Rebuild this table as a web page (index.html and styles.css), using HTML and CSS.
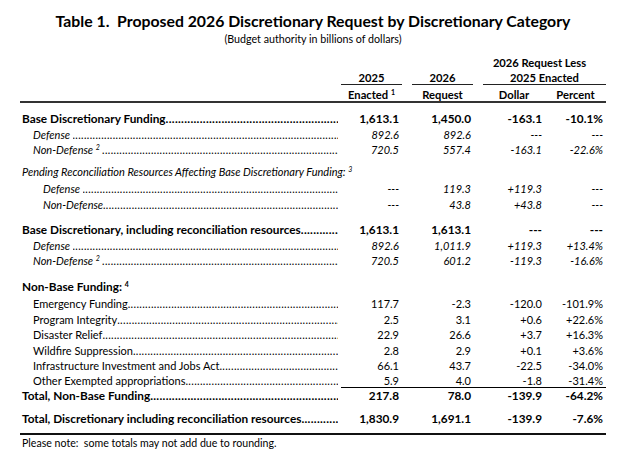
FILE: index.html
```html
<!DOCTYPE html>
<html>
<head>
<meta charset="utf-8">
<link rel="stylesheet" href="styles.css">
</head>
<body>
<div class="page">
  <h1 class="title">Table 1.&nbsp; Proposed 2026 Discretionary Request by Discretionary Category</h1>
  <p class="sub">(Budget authority in billions of dollars)</p>

  <div class="tbl">
    <div class="row hrow h1">
      <div class="lbl"></div><div></div><div></div>
      <div class="grp">2026 Request Less</div>
    </div>
    <div class="row hrow h2">
      <div class="lbl"></div>
      <div class="u">2025</div>
      <div class="u ml">2026</div>
      <div class="grp u ml">2025 Enacted</div>
    </div>
    <div class="row hrow h3">
      <div class="lbl"></div>
      <div>Enacted <sup>1</sup></div>
      <div class="ml">Request</div>
      <div class="ml">Dollar</div>
      <div>Percent</div>
    </div>

    <div class="row b first">
      <div class="lbl"><span>Base Discretionary Funding</span><span class="lead"></span></div>
      <div class="n">1,613.1</div><div class="n">1,450.0</div><div class="n">-163.1</div><div class="n">-10.1%</div>
    </div>
    <div class="row i">
      <div class="lbl in1"><span>Defense&nbsp;</span><span class="lead"></span></div>
      <div class="n">892.6</div><div class="n">892.6</div><div class="n">---</div><div class="n">---</div>
    </div>
    <div class="row i">
      <div class="lbl in1"><span>Non-Defense&nbsp;<sup>2</sup>&nbsp;</span><span class="lead"></span></div>
      <div class="n">720.5</div><div class="n">557.4</div><div class="n">-163.1</div><div class="n">-22.6%</div>
    </div>

    <div class="row i pend">
      <div class="lbl wide"><span>Pending Reconciliation Resources Affecting Base Discretionary Funding:&nbsp;<sup>3</sup></span></div>
    </div>
    <div class="row i">
      <div class="lbl in2"><span>Defense&nbsp;</span><span class="lead"></span></div>
      <div class="n">---</div><div class="n">119.3</div><div class="n">+119.3</div><div class="n">---</div>
    </div>
    <div class="row i">
      <div class="lbl in2"><span>Non-Defense</span><span class="lead"></span></div>
      <div class="n">---</div><div class="n">43.8</div><div class="n">+43.8</div><div class="n">---</div>
    </div>

    <div class="row b sec">
      <div class="lbl"><span>Base Discretionary, including reconciliation resources</span><span class="lead"></span></div>
      <div class="n">1,613.1</div><div class="n">1,613.1</div><div class="n">---</div><div class="n">---</div>
    </div>
    <div class="row i">
      <div class="lbl in1"><span>Defense&nbsp;</span><span class="lead"></span></div>
      <div class="n">892.6</div><div class="n">1,011.9</div><div class="n">+119.3</div><div class="n">+13.4%</div>
    </div>
    <div class="row i">
      <div class="lbl in1"><span>Non-Defense&nbsp;<sup>2</sup>&nbsp;</span><span class="lead"></span></div>
      <div class="n">720.5</div><div class="n">601.2</div><div class="n">-119.3</div><div class="n">-16.6%</div>
    </div>

    <div class="row b nb">
      <div class="lbl wide"><span>Non-Base Funding:&nbsp;<sup>4</sup></span></div>
    </div>
    <div class="row r">
      <div class="lbl in1"><span>Emergency Funding</span><span class="lead"></span></div>
      <div class="n">117.7</div><div class="n">-2.3</div><div class="n">-120.0</div><div class="n">-101.9%</div>
    </div>
    <div class="row r">
      <div class="lbl in1"><span>Program Integrity</span><span class="lead"></span></div>
      <div class="n">2.5</div><div class="n">3.1</div><div class="n">+0.6</div><div class="n">+22.6%</div>
    </div>
    <div class="row r">
      <div class="lbl in1"><span>Disaster Relief</span><span class="lead"></span></div>
      <div class="n">22.9</div><div class="n">26.6</div><div class="n">+3.7</div><div class="n">+16.3%</div>
    </div>
    <div class="row r">
      <div class="lbl in1"><span>Wildfire Suppression</span><span class="lead"></span></div>
      <div class="n">2.8</div><div class="n">2.9</div><div class="n">+0.1</div><div class="n">+3.6%</div>
    </div>
    <div class="row r">
      <div class="lbl in1"><span>Infrastructure Investment and Jobs Act</span><span class="lead"></span></div>
      <div class="n">66.1</div><div class="n">43.7</div><div class="n">-22.5</div><div class="n">-34.0%</div>
    </div>
    <div class="row r last">
      <div class="lbl in1"><span>Other Exempted appropriations</span><span class="lead"></span></div>
      <div class="n">5.9</div><div class="n">4.0</div><div class="n">-1.8</div><div class="n">-31.4%</div>
    </div>
    <div class="row b tot">
      <div class="lbl"><span>Total, Non-Base Funding</span><span class="lead"></span></div>
      <div class="n">217.8</div><div class="n">78.0</div><div class="n">-139.9</div><div class="n">-64.2%</div>
    </div>
    <div class="row b grand">
      <div class="lbl"><span>Total, Discretionary including reconciliation resources</span><span class="lead"></span></div>
      <div class="n">1,830.9</div><div class="n">1,691.1</div><div class="n">-139.9</div><div class="n">-7.6%</div>
    </div>
  </div>
  <p class="note">Please note:&nbsp; some totals may not add due to rounding.</p>
</div>
</body>
</html>
```

FILE: styles.css
```css
html, body {
  margin: 0;
  padding: 0;
  background: #fff;
}

body {
  font-family: Lato, "Open Sans", "Liberation Sans", sans-serif;
  color: #000;
}

.page {
  width: 640px;
  padding-top: 10px;
}

.title {
  margin: 0;
  width: 586px;
  padding-left: 20px;
  text-align: center;
  font-size: 15.8px;
  line-height: 21px;
  font-weight: 700;
}

.sub {
  margin: 0;
  width: 586px;
  padding-left: 20px;
  text-align: center;
  font-size: 10.7px;
  line-height: 15px;
}

.tbl {
  margin-left: 20px;
  width: 586px;
  margin-top: 9px;
}

.row {
  display: grid;
  grid-template-columns: 321px 61px 71px 72px 61px;
  grid-template-rows: 15.5px;
  height: 15.5px;
  line-height: 15.5px;
  font-size: 11px;
  white-space: nowrap;
}

.hrow {
  font-weight: 700;
  font-size: 11.2px;
  text-align: center;
  grid-template-rows: 15px;
  height: 15px;
  line-height: 15px;
}

.hrow .grp {
  grid-column: 4 / 6;
}

.hrow .ml {
  margin-left: 10px;
}

.h2 .u {
  border-bottom: 1px solid #222;
}

.h3 {
  margin-top: 1px;
  border-bottom: 2px solid #333;
  line-height: 17px;
}

sup {
  font-size: 7px;
  line-height: 0;
  vertical-align: 4px;
}

.lbl {
  display: flex;
  padding-right: 3px;
  text-align: left;
  min-width: 0;
}

.lbl.wide {
  grid-column: 1 / 6;
}

.lead {
  flex: 1;
  overflow: hidden;
  min-width: 0;
  letter-spacing: 0.3px;
}

.lead::after {
  content: "....................................................................................................................................................................................";
}

.in1 {
  padding-left: 13px;
}

.in2 {
  padding-left: 23px;
}

.lbl:not(.in1):not(.in2) {
  padding-left: 2px;
}

.n {
  text-align: right;
  padding-right: 3px;
}

.row .n:nth-child(3) {
  padding-right: 2px;
}

.b {
  font-weight: 700;
  font-size: 11.8px;
}

.i {
  font-style: italic;
}

.first {
  margin-top: 8.25px;
}

.pend {
  margin-top: 6.5px;
  grid-template-rows: 17px;
  height: 17px;
}

.sec {
  margin-top: 10px;
}

.nb {
  grid-template-rows: 17px;
  height: 17px;
  margin-top: 10.5px;
}

.last {
  grid-template-rows: 14.5px;
  height: 14.5px;
  line-height: 14px;
}

.last .n {
  border-bottom: 1px solid #000;
}

.grand {
  margin-top: 7.5px;
  border-bottom: 2px solid #111;
  grid-template-rows: 22px;
  height: 22px;
}

.note {
  margin: 1.5px 0 0 22px;
  font-size: 10.6px;
  line-height: 12px;
}
```
